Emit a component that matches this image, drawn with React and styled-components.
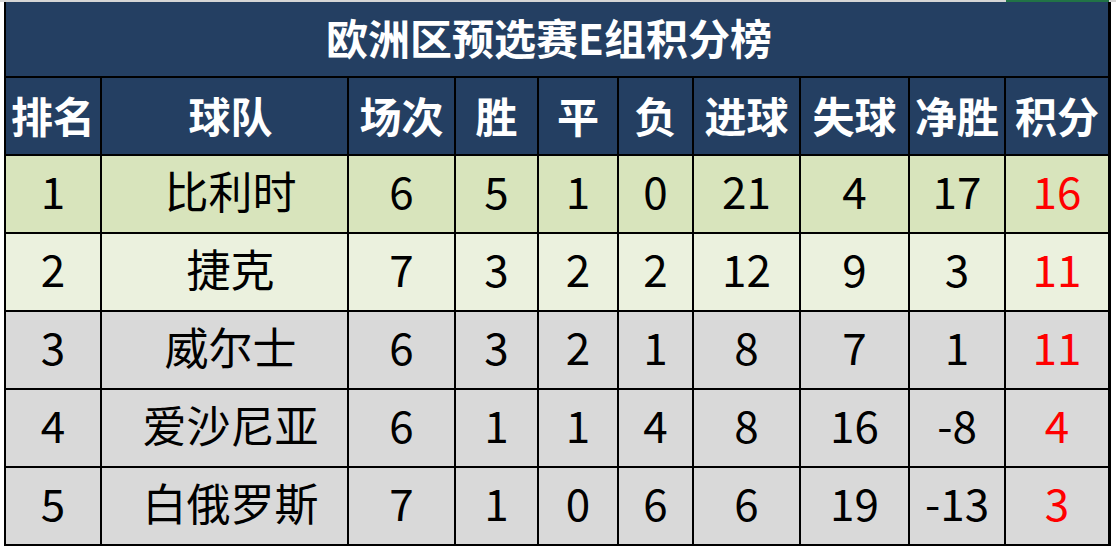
import React from "react";
import styled, { createGlobalStyle } from "styled-components";

const GlobalStyle = createGlobalStyle`
  html, body {
    margin: 0;
    padding: 0;
    background: #ffffff;
  }
  body {
    font-family: "Noto Sans CJK SC", "Noto Sans", sans-serif;
  }
`;

const columns = [94, 245, 105, 81, 78, 73, 105, 107, 94, 102];

const Sheet = styled.div`
  width: 1116px;
  height: 549px;
  overflow: hidden;
  background: #ffffff;
`;

const TopStrip = styled.div`
  display: flex;
  height: 2px;
  background: #d6d6d6;
`;

const StripSegment = styled.div`
  width: ${(p) => p.w}px;
  flex: ${(p) => (p.w ? "none" : "1")};
  background: ${(p) => (p.active ? "#217346" : "transparent")};
`;

const Table = styled.div`
  display: grid;
  grid-template-columns: ${columns.map((c) => `${c}px`).join(" ")};
  grid-template-rows: 74px 76px repeat(5, 76px);
  gap: 2px;
  width: max-content;
  margin-left: 4px;
  padding: 0 3px 2px 2px;
  background: #000000;
`;

const Title = styled.div`
  grid-column: 1 / -1;
  display: flex;
  align-items: center;
  justify-content: center;
  padding: 0 16px 4px 0;
  background: #243f62;
  color: #ffffff;
  font-size: 42px;
  font-weight: 700;
  line-height: 1;
`;

const HeadCell = styled.div`
  display: flex;
  align-items: center;
  justify-content: center;
  background: #243f62;
  color: #ffffff;
  font-size: 42px;
  font-weight: 700;
  line-height: 1;
  white-space: nowrap;
  padding-bottom: 3px;
  padding-left: ${(p) => (p.team ? 12 : 0)}px;
`;

const rowColors = ["#d8e4bc", "#ebf1de", "#d9d9d9", "#d9d9d9", "#d9d9d9"];

const Cell = styled.div`
  display: flex;
  align-items: center;
  justify-content: center;
  background: ${(p) => p.bg};
  color: ${(p) => (p.points ? "#ff0000" : "#000000")};
  font-size: 44px;
  font-weight: 400;
  line-height: 1;
  white-space: nowrap;
  padding-bottom: 8px;
  padding-left: ${(p) => (p.team ? 12 : 0)}px;
`;

const headers = ["排名", "球队", "场次", "胜", "平", "负", "进球", "失球", "净胜", "积分"];

const rows = [
  [1, "比利时", 6, 5, 1, 0, 21, 4, 17, 16],
  [2, "捷克", 7, 3, 2, 2, 12, 9, 3, 11],
  [3, "威尔士", 6, 3, 2, 1, 8, 7, 1, 11],
  [4, "爱沙尼亚", 6, 1, 1, 4, 8, 16, -8, 4],
  [5, "白俄罗斯", 7, 1, 0, 6, 6, 19, -13, 3],
];

const App = () => {
  return (
    <Sheet>
      <GlobalStyle />
      <TopStrip>
        <StripSegment w={1006} />
        <StripSegment w={103} active />
        <StripSegment />
      </TopStrip>
      <Table>
        <Title>欧洲区预选赛E组积分榜</Title>
        {headers.map((h, i) => (
          <HeadCell key={h} team={i === 1}>
            {h}
          </HeadCell>
        ))}
        {rows.map((row, r) =>
          row.map((v, c) => (
            <Cell
              key={`${r}-${c}`}
              bg={rowColors[r]}
              team={c === 1}
              points={c === row.length - 1}
            >
              {v}
            </Cell>
          ))
        )}
      </Table>
    </Sheet>
  );
};

export default App;
